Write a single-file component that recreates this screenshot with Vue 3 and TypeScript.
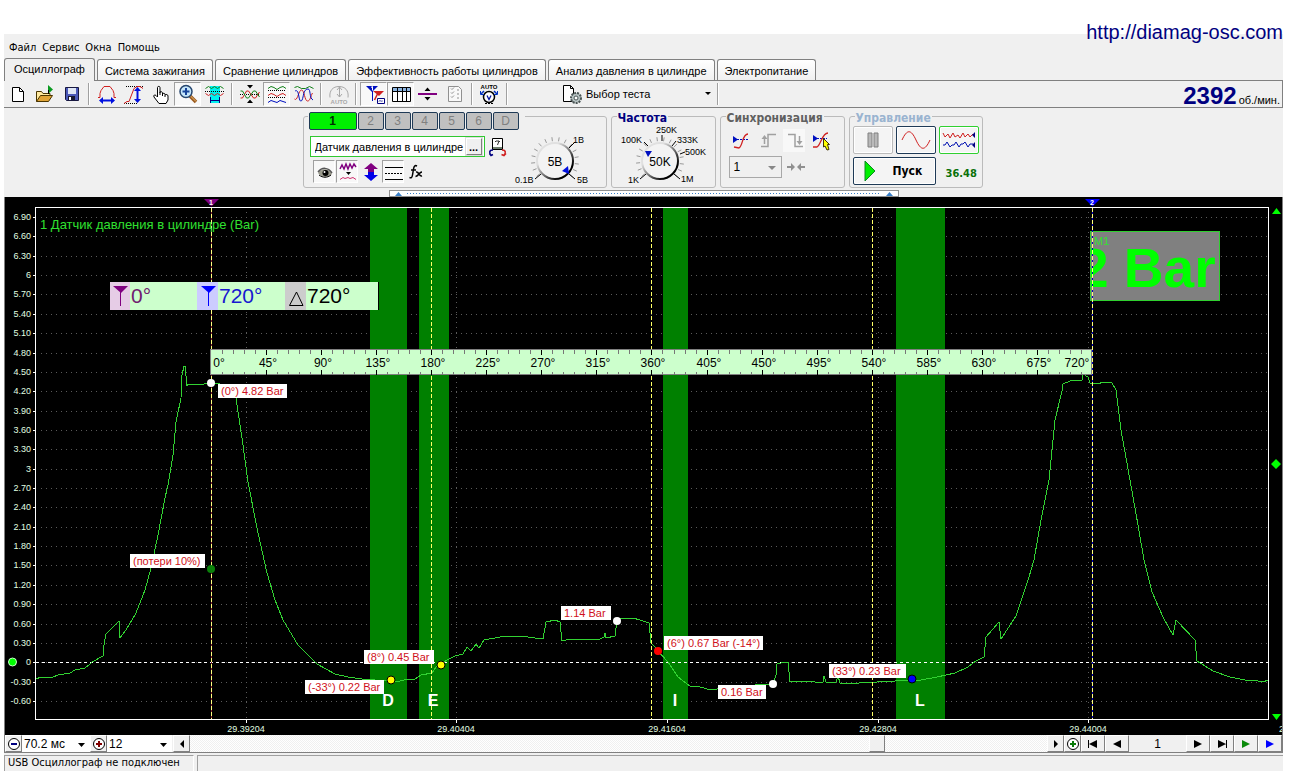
<script setup lang="ts">
interface Tool { name: string; art: string; pressed?: boolean }
interface Tag { x: number; y: number; w: number; text: string }
interface Dot { x: number; y: number; fill: string; stroke?: string }

const menu = ['Файл', 'Сервис', 'Окна', 'Помощь']
const tabs = [
  'Осциллограф', 'Система зажигания', 'Сравнение цилиндров',
  'Эффективность работы цилиндров', 'Анализ давления в цилиндре', 'Электропитание',
]

const toolGroups: Tool[][] = [
  [
    { name: 'Новый', art: '<path d="M6.5 4.5h7l4 4v10h-11z" fill="#fff" stroke="#000"/><path d="M13.5 4.5v4h4" fill="none" stroke="#000"/>' },
    { name: 'Открыть', art: '<path d="M3.500 18.500v-10h5l1.500 2h7v3" fill="#ffe9a0" stroke="#4a3500"/><path d="M3.500 18.500l4-6h12l-4 6z" fill="#e0a437" stroke="#4a3500"/><path d="M15 2v9l5-4.500z" fill="#0a9a20"/><path d="M15.500 7v4" stroke="#000"/>' },
    { name: 'Сохранить', art: '<path d="M5.500 4.500h13v13h-12l-1-1z" fill="#4a58b8" stroke="#181840"/><path d="M8 5h8v6H8z" fill="#dfe6f5"/><path d="M8 13h7v4H8z" fill="#181830"/><path d="M9 14h2v3H9z" fill="#fff"/>' },
  ],
  [
    { name: 'Амплитуда', art: '<path d="M3 14.500h2v-4l1-3 3-4h6l3 4 1 3v4h2" fill="none" stroke="#d02020"/><path d="M6 17.500h12" stroke="#0010e0" stroke-width="2"/><path d="M4 17.500l4-3.500v7zM20 17.500l-4-3.500v7z" fill="#0010e0"/>' },
    { name: 'Фронт', art: '<path d="M4 3.500h18M2 20.500h14" stroke="#000" stroke-dasharray="1 1"/><path d="M2 20.500l3-2h2l5-13 3-2h3l3 2" fill="none" stroke="#d02020"/><path d="M15.500 6v11" stroke="#0010e0" stroke-width="2"/><path d="M15.500 4l-3.500 4h7zM15.500 20l-3.500-4h7z" fill="#0010e0"/>' },
    { name: 'Рука', art: '<path d="M8.500 14V4.500c0-1.500 2.500-1.500 2.500 0V10v-1c1-1 2.500 0 2.500 1v1c.5-1 2.500-1 2.500.5v.5c1-1 3-.5 3 1v4l-2 3.500h-7l-5-6.500c-1-2 1-2.500 2-1.500z" fill="#fff" stroke="#000"/><path d="M11 10v2M13.500 11v2M16 12v2" stroke="#000"/>' },
    { name: 'Увеличить', pressed: true, art: '<path d="M14 13l6 6" stroke="#9a5a20" stroke-width="3.500"/><path d="M14.500 13l5.500 5.500" stroke="#f0c070" stroke-width="1"/><circle cx="10" cy="8.500" r="6" fill="#c5e6fa" stroke="#26466e" stroke-width="1.500"/><path d="M6.500 8.500h7M10 5v7" stroke="#17449a" stroke-width="2"/>' },
    { name: 'Участок', art: '<path d="M7 3h10v17H7z" fill="#00f0f0"/><path d="M2.500 5.500l3-2 3 2 3-2 3 2 3-2 3 2" fill="none" stroke="#108018"/><path d="M2.500 10.500l3 2 3-2 3 2 3-2 3 2 3-2" fill="none" stroke="#d02020"/><path d="M2 8.500h19" stroke="#000" stroke-dasharray="1 1"/><path d="M7.500 14v6M16.500 14v6M8 17.500h8" stroke="#000080"/>' },
  ],
  [
    { name: 'Совместить', art: '<path d="M9 2h6l-3 3.500zM9 20h6l-3-3.500z" fill="#000"/><path d="M2 11.500h20" stroke="#000" stroke-dasharray="1 1"/><path d="M2.500 15h2l4-7h2l5 7h2l4-6" fill="none" stroke="#d02020"/><path d="M2.500 8h2l4 7h2l5-7h2l4 6" fill="none" stroke="#108018"/>' },
    { name: 'Раздельно', pressed: true, art: '<path d="M3 5.500l3-2 3 1 3 2 3-2 3-1 3 2" fill="none" stroke="#108018"/><path d="M3 7.500h18M3 14.500h18" stroke="#000" stroke-dasharray="1 1"/><path d="M3 12.500l3-2 3 1 3 2 3-2 3-1 3 2" fill="none" stroke="#d02020"/><path d="M3 19.500l3-2 3 1 3 1 3-2 3 1 3 1" fill="none" stroke="#0010c0"/>' },
    { name: 'Наложить', art: '<path d="M2.500 4.500l3-1 4 2h4l4-2 4 2" fill="none" stroke="#108018"/><path d="M2.500 16c3 3 4-9 7-9s3 11 6 11 3-5 5-8" fill="none" stroke="#d02020"/><path d="M3 8c2-1 3 0 4 6s3 5 4 0 2-8 5-8 1 9 5 11" fill="none" stroke="#0010c0"/>' },
  ],
  [
    { name: 'Автоамплитуда', art: '<path d="M3 14.500c-1-7 3-11 9-11s10 4 9 11M12.500 4v10M10 7l2.500-3 2.500 3M10 11l2.500 3 2.500-3" fill="none" stroke="#a8a8a8"/><text x="12" y="21" text-anchor="middle" font-size="6" font-weight="700" fill="#a8a8a8">AUTO</text>' },
  ],
  [
    { name: 'Маркеры', pressed: true, art: '<path d="M4 3h12l-6 6z" fill="#0010c0"/><path d="M10.500 8v10" stroke="#0010c0"/><path d="M11 8h11l-5 5z" fill="#d02020"/><path d="M16.500 9l-4 8" stroke="#d02020" stroke-width="1.500"/><path d="M9 4.500l1.500-1v4" fill="none" stroke="#fff"/><path d="M15.500 15.500h7v5h-7z" fill="#fff" stroke="#000080"/><path d="M17 18.500l1-1 1 1M20 17.500v1" fill="none" stroke="#000080"/>' },
    { name: 'Таблица', pressed: true, art: '<path d="M3.500 4.500h18v14h-18z" fill="#fff" stroke="#000"/><path d="M4 5h17v3H4z" fill="#8cb4e0"/><path d="M3 8.500h19M8.500 5v13M13.500 5v13M17.500 5v13" stroke="#000"/>' },
    { name: 'Линия', art: '<path d="M2 11h19" stroke="#800080" stroke-width="2"/><path d="M8.500 8h6l-3-3.500zM8.500 14h6l-3 3.500z" fill="#000"/>' },
    { name: 'Список', art: '<path d="M5.500 3.500h10l3 3v12h-13z" fill="#f8f8f8" stroke="#909090"/><path d="M8 5.500l1 1 2-2M8 9.500l1 1 2-2M8 13.500l1 1 2-2" fill="none" stroke="#909090"/><path d="M14 7h2M14 11h2M14 15h2" stroke="#909090"/>' },
  ],
  [
    { name: 'Авто', art: '<text x="11" y="6" text-anchor="middle" font-size="6" font-weight="700" fill="#000">AUTO</text><circle cx="11" cy="14" r="5.500" fill="#fff" stroke="#000" stroke-width="1.500"/><path d="M9 12.500l2 4 2-4" fill="none" stroke="#0010a0" stroke-width="1.300"/><path d="M3 11l3-3M19 11l-3-3" stroke="#0030c0" stroke-width="1.500"/><path d="M2.500 8v3.500H6M19.500 8v3.500H16" fill="none" stroke="#0030c0"/><path d="M7 20.500h8" stroke="#000" stroke-dasharray="2 1"/>' },
  ],
]

const channels = ['2', '3', '4', '5', '6', 'D']
const channelTools: Tool[] = [
  { name: 'Показать', pressed: true, art: '<path d="M4 12c4-5 11-5 14 1-4 4-10 4-14-1z" fill="#9a9a8c"/><path d="M4 11c4-5 10-5 14 1" fill="none" stroke="#555" stroke-width="1.500"/><circle cx="11.500" cy="12" r="3" fill="#000"/><circle cx="10.500" cy="11" r="1" fill="#fff"/><path d="M5 14c4 3 8 3 12 0" fill="none" stroke="#000"/>' },
  { name: 'Фильтр', pressed: true, art: '<path d="M3 8l2-4 2 4 2-5 2 5 2-5 2 4 2-4 2 3" fill="none" stroke="#800080" stroke-width="1.500"/><path d="M9 11h5l-2.500 3z" fill="#000"/><path d="M3 18.500l3-2 2 1 3-1 2 1 3-1 3 2" fill="none" stroke="#d03070"/>' },
  { name: 'Сдвиг', art: '<path d="M11 2l7 6h-4v3H8V8H4z" fill="#800080"/><path d="M11 20l7-6h-4v-3H8v3H4z" fill="#0000e8"/>' },
  { name: 'Сетка', pressed: true, art: '<path d="M2 6.500h18M2 18.500h18" stroke="#000"/><path d="M2 12.500h18" stroke="#000" stroke-dasharray="2 1"/>' },
  { name: 'Формула', art: '<path d="M11 5c-2-1-3 0-3.500 3l-1 6c-.5 3-1.500 3-3 2.500M5 9h5" fill="none" stroke="#000" stroke-width="1.500"/><path d="M10 11c3-1 3 5 6 4M16 11c-3 0-3 4-6.500 4.500" fill="none" stroke="#000" stroke-width="1.500"/>' },
]
const syncTools: Tool[] = [
  { name: 'Уровень', art: '<path d="M3 6l5 3.500-5 3.500z" fill="#0010c0"/><path d="M7 9.500h11" stroke="#0010c0" stroke-dasharray="2 1"/><path d="M4 17l5 1c4-2 3-14 9-14" fill="none" stroke="#d02020" stroke-width="1.300"/>' },
  { name: 'По фронту', art: '<path d="M4 16.500h7v-12h8M7.500 14V8" fill="none" stroke="#a0a0a0" stroke-width="1.500"/><path d="M4.500 9l3-4 3 4z" fill="#a0a0a0"/>' },
  { name: 'По спаду', pressed: true, art: '<path d="M4 4.500h7v12h8M15.500 6v6" fill="none" stroke="#a0a0a0" stroke-width="1.500"/><path d="M12.500 11l3 4 3-4z" fill="#a0a0a0"/>' },
  { name: 'Выбор уровня', art: '<path d="M2 5l5 3.500-5 3.500z" fill="#0010c0"/><path d="M6 8.500h10" stroke="#0010c0" stroke-dasharray="2 1"/><path d="M2 17h4c4-2 5-14 11-14" fill="none" stroke="#d02020" stroke-width="1.300"/><path d="M12.500 8.500l6 6h-2l1.500 5-2 .5-2-4-1.500 1z" fill="#ff0" stroke="#403000"/>' },
]

const yLabels = Array.from({ length: 26 }, (_, i) => {
  const v = (69 - i * 3) / 10
  return { y: Math.round(217 + i * 19.36), text: Number.isInteger(v) && v % 3 === 0 ? String(v) : v.toFixed(2) }
})
const xLabels = [
  { x: 246, text: '29.39204' }, { x: 456, text: '29.40404' }, { x: 667, text: '29.41604' },
  { x: 878, text: '29.42804' }, { x: 1088, text: '29.44004' },
]
const bands = [
  { x: 370, w: 37, name: 'D', tx: 388 }, { x: 419, w: 30, name: 'E', tx: 433 },
  { x: 663, w: 25, name: 'I', tx: 675 }, { x: 896, w: 49, name: 'L', tx: 920 },
]
const rulerTicks = Array.from({ length: 79 }, (_, i) => ({ x: Math.round(211 + (i + 1) * 11.012) + 0.5, major: (i + 1) % 5 === 0 }))
const rulerLabels = Array.from({ length: 17 }, (_, i) => ({
  x: i === 0 ? 219 : i === 16 ? 1077 : Math.round(211 + i * 55.06) + 2,
  text: `${i * 45}°`,
}))
const tags: Tag[] = [
  { x: 218, y: 384, w: 69, text: '(0°) 4.82 Bar' },
  { x: 130, y: 554, w: 75, text: '(потери 10%)' },
  { x: 364, y: 650, w: 70, text: '(8°) 0.45 Bar' },
  { x: 305, y: 680, w: 79, text: '(-33°) 0.22 Bar' },
  { x: 561, y: 606, w: 50, text: '1.14 Bar' },
  { x: 664, y: 636, w: 99, text: '(6°) 0.67 Bar (-14°)' },
  { x: 718, y: 685, w: 48, text: '0.16 Bar' },
  { x: 829, y: 664, w: 77, text: '(33°) 0.23 Bar' },
]
const dots: Dot[] = [
  { x: 211, y: 383, fill: '#fff' }, { x: 211, y: 569, fill: '#0a800a' },
  { x: 391, y: 680, fill: '#ff0', stroke: '#000' }, { x: 441, y: 665, fill: '#ff0', stroke: '#000' },
  { x: 617, y: 621, fill: '#fff' }, { x: 658, y: 651, fill: '#f00' },
  { x: 773, y: 684, fill: '#fff' }, { x: 912, y: 679, fill: '#00f', stroke: '#000' },
]
const wave = [
  '36,679 41,677 53,677 58,675 70,673 75,670 85,668 90,664 92,662 103,656 104,645 106,634 119,621 120,638 126,630 136,613 145,590 151,568',
  '158,535 165,498 168,485 173,455 176,422 181,398 182,375 184,366 185,366 187,386 188,384 200,385 204,384 211,383 220,384 232,386 236,398 243,445 248,482 257,528 267,573 275,600 283,620 298,645 317,664 335,674 348,677 362,679 375,680 391,681 400,681 408,679 415,679 421,675 432,673 436,667 441,664',
  '447,660 455,656 463,654 467,647 471,651 476,644 479,648 484,640 500,637 503,636 507,637 520,636 543,639 546,622 555,620 560,622 562,641 570,639 600,639 604,637 605,633 606,638 615,636 617,621 621,618 633,618 640,620 649,623 651,643 654,646 658,651 668,662 678,677 690,686 700,687 711,690 717,689 740,688 760,684 773,684',
  '776,675 777,664 781,663 788,662 790,682 802,681 815,682 823,682 824,676 826,682 836,682 838,676 840,683 855,684 863,682 877,682 895,681 911,680 921,680 937,677 955,673 968,667 976,661 984,657 986,637 999,622 1001,639 1016,616 1029,577 1034,560',
  '1041,520 1049,480 1055,420 1062,391 1063,384 1070,381 1082,380 1083,374 1088,377 1090,383 1098,384 1103,382 1112,383 1116,390 1121,430 1130,480 1138,525 1144,560 1152,592 1163,617 1173,635 1176,620 1195,640 1197,661 1213,671 1230,677 1245,680 1258,681 1263,682 1268,680',
].join(' ')

const tick = (cx: number, cy: number, r1: number, r2: number, deg: number) => {
  const a = (deg * Math.PI) / 180
  const p = (r: number) => `${(cx + r * Math.cos(a)).toFixed(1)} ${(cy + r * Math.sin(a)).toFixed(1)}`
  return `M${p(r1)}L${p(r2)}`
}
const ring = (cx: number, cy: number) =>
  Array.from({ length: 16 }, (_, i) => tick(cx, cy, 20, 24, 140 + i * 17.5)).join('')
</script>

<template>
  <div class="page">
    <a class="site" href="http://diamag-osc.com">http://diamag-osc.com</a>
    <main class="app">
      <nav class="menu">
        <button v-for="m in menu" :key="m" type="button">{{ m }}</button>
      </nav>
      <div class="tabs" role="tablist">
        <button v-for="(t, i) in tabs" :key="t" type="button" role="tab" class="tab" :class="{ active: i === 0 }" :aria-selected="i === 0">{{ t }}</button>
      </div>

      <div class="toolbar">
        <template v-for="(g, gi) in toolGroups" :key="gi">
          <button v-for="t in g" :key="t.name" type="button" class="tool" :class="{ pressed: t.pressed }" :aria-label="t.name">
            <svg width="24" height="22" viewBox="0 0 24 22" v-html="t.art"></svg>
          </button>
          <span class="sep"></span>
        </template>
        <button type="button" class="test">
          <svg width="22" height="22" viewBox="0 0 22 22">
            <path d="M2.500 2.500h7l3 3v13h-10z" fill="#fff" stroke="#000" />
            <path d="M9.500 2.500v3h3" fill="none" stroke="#000" />
            <circle cx="15" cy="15" r="5" fill="#b8c4c4" stroke="#4a5555" stroke-width="2" stroke-dasharray="2 1" />
            <circle cx="15" cy="15" r="2" fill="#fff" stroke="#4a5555" />
          </svg>
          <span>Выбор теста</span>
          <svg class="caret" width="7" height="4" viewBox="0 0 7 4"><path d="M1 0h6L4 3z" /></svg>
        </button>
        <span class="sep"></span>
        <div class="rpm"><strong>2392</strong><span>об./мин.</span></div>
      </div>

      <div class="panel">
        <fieldset class="group channel">
          <legend class="chan-legend">
            <button type="button" class="chan on">1</button>
            <button v-for="c in channels" :key="c" type="button" class="chan">{{ c }}</button>
          </legend>
          <div class="chan-body">
            <div class="row">
              <div class="sensor">
                <input type="text" value="Датчик давления в цилиндре" aria-label="Датчик" />
                <button type="button" aria-label="Выбрать датчик">...</button>
              </div>
              <button type="button" class="swap" aria-label="Калибровка">
                <svg width="20" height="20" viewBox="0 0 20 20">
                  <path d="M4.500 1.500h10v11h-10z" fill="#fff" stroke="#000" />
                  <path d="M5 10h9v2H5z" fill="#708070" />
                  <path d="M7 5l1-1h3l1 1M11 4l-1.500 4" fill="none" stroke="#333" />
                  <path d="M5 13c-4 0-4 3-2 5M5 17.500l-2 1-1.500-2" fill="none" stroke="#000080" stroke-width="1.500" />
                  <path d="M14 13c4 0 4 3 2 5M13.500 17.500l2.500 1 2-2" fill="none" stroke="#d02020" stroke-width="1.500" />
                </svg>
              </button>
            </div>
            <div class="row minis">
              <button v-for="t in channelTools" :key="t.name" type="button" class="mini" :class="{ pressed: t.pressed }" :aria-label="t.name">
                <svg width="22" height="22" viewBox="0 0 22 22" v-html="t.art"></svg>
              </button>
            </div>
          </div>
          <svg class="knob" width="96" height="66" viewBox="509 121 96 66">
            <defs>
              <linearGradient id="rim" x1="0" y1="0" x2="1" y2="1">
                <stop offset="0.300" stop-color="#e0e0e0" /><stop offset="0.800" stop-color="#000" />
              </linearGradient>
            </defs>
            <path :d="ring(556, 161)" stroke="#999" />
            <path d="M570 148l6-6M570 174l6 5M542 174l-6 5" stroke="#000" />
            <circle cx="556" cy="161" r="18" fill="#f3f3f3" stroke="url(#rim)" stroke-width="2" />
            <path d="M563 171l6-5 1 8z" fill="#0010e0" />
            <text x="556" y="166" font-size="12" text-anchor="middle">5В</text>
            <text x="574" y="143">1В</text><text x="578" y="183">5В</text><text x="516" y="183">0.1В</text>
          </svg>
        </fieldset>

        <fieldset class="group freq">
          <legend>Частота</legend>
          <svg class="knob" width="103" height="66" viewBox="612 121 103 66">
            <path :d="ring(660, 161)" stroke="#999" />
            <path d="M648 146l-4-4M662 141v-6M672 146l4-5M680 154l5-2M674 174l6 5M646 174l-6 5" stroke="#000" />
            <circle cx="660" cy="161" r="18" fill="#f3f3f3" stroke="url(#rim)" stroke-width="2" />
            <path d="M645 151h7l-4 6z" fill="#0010c0" />
            <text x="660" y="166" font-size="12" text-anchor="middle">50K</text>
            <text x="656" y="133">250K</text><text x="621" y="143">100K</text><text x="677" y="143">333K</text>
            <text x="685" y="155">500K</text><text x="628" y="183">1K</text><text x="681" y="182">1M</text>
          </svg>
        </fieldset>

        <fieldset class="group sync">
          <legend>Синхронизация</legend>
          <div class="row sync-tools">
            <button v-for="t in syncTools" :key="t.name" type="button" class="mini" :class="{ pressed: t.pressed }" :aria-label="t.name">
              <svg width="22" height="22" viewBox="0 0 22 22" v-html="t.art"></svg>
            </button>
          </div>
          <div class="row sync-row">
            <label class="pick disabled">
              <select aria-label="Канал синхронизации"><option>1</option></select>
              <svg class="caret" width="8" height="4" viewBox="0 0 8 4"><path d="M0 0h8L4 4z" /></svg>
            </label>
            <svg width="20" height="12" viewBox="0 0 20 12"><path d="M1 5h4V2l4 4-4 4V7H1zM19 5h-4V2l-4 4 4 4V7h4z" fill="#909090" /></svg>
          </div>
        </fieldset>

        <fieldset class="group control">
          <legend>Управление</legend>
          <div class="ctl-grid">
            <button type="button" class="ctl off" aria-label="Пауза">
              <svg width="12" height="16" viewBox="0 0 12 16"><path d="M1 1h4v14H1zM7 1h4v14H7z" fill="#b8b8b8" stroke="#808080" /></svg>
            </button>
            <button type="button" class="ctl" aria-label="Сигнал">
              <svg width="32" height="22" viewBox="0 0 32 22"><path d="M2 11C7 0 11 0 16 11s9 11 14 0" fill="none" stroke="#d02020" /></svg>
            </button>
            <button type="button" class="ctl lit" aria-label="Самописец">
              <svg width="36" height="22" viewBox="0 0 36 22">
                <path d="M2 4l2 4 3-3 2 4 3-5 2 4 3-2 2 3 3-5 2 4 3-3 2 3 3-3" fill="none" stroke="#d02020" />
                <path d="M2 16h2l2-3 3 5 2-2h2l2-3 3 5 2-3h2l2-2 3 5 2-3h3" fill="none" stroke="#0010b0" />
                <path d="M34 3v6l-3-3zM34 13v6l-3-3z" fill="#000080" />
              </svg>
            </button>
            <button type="button" class="ctl start">
              <svg width="12" height="20" viewBox="0 0 12 20"><path d="M1 0l10 10L1 20z" fill="#00f000" stroke="#0a8a20" /></svg>
              <span>Пуск</span>
            </button>
            <output>36.48</output>
          </div>
        </fieldset>
      </div>

      <div class="splitter">
        <svg width="7" height="4" viewBox="0 0 7 4"><path d="M0 4l3.500-4L7 4z" /></svg>
        <i></i>
        <svg width="7" height="4" viewBox="0 0 7 4"><path d="M0 4l3.500-4L7 4z" /></svg>
      </div>

      <svg class="scope" viewBox="5 197 1277 538" role="img" aria-label="Осциллограмма давления">
        <defs><clipPath id="meter"><rect x="1091" y="232" width="128" height="68" /></clipPath></defs>
        <rect x="5" y="197" width="1277" height="538" fill="#000" />
        <g class="grid">
          <path v-for="l in yLabels" :key="l.y" :d="`M41 ${l.y + 0.5}H1268`" />
          <path v-for="l in xLabels" :key="l.x" :d="`M${l.x + 0.5} 212V719`" />
        </g>
        <rect v-for="b in bands" :key="b.name" :x="b.x" y="208" :width="b.w" height="511" fill="#008000" />
        <g class="axis-text">
          <template v-for="l in yLabels" :key="l.y">
            <path :d="`M33 ${l.y + 0.5}h3`" stroke="#fff" />
            <text x="31" :y="l.y + 3" text-anchor="end">{{ l.text }}</text>
          </template>
          <template v-for="l in xLabels" :key="l.x">
            <path :d="`M${l.x + 0.5} 720v3`" stroke="#fff" />
            <text :x="l.x" y="732" text-anchor="middle">{{ l.text }}</text>
          </template>
          <text x="1279" y="732">2</text>
        </g>
        <path d="M36 662.500H1268" stroke="#fff" stroke-dasharray="3 3" />
        <polyline class="wave" :points="wave" />
        <path d="M431.500 208V719M651.500 208V719M872.500 208V719" stroke="#ff6" stroke-dasharray="4 2" />
        <path d="M211.500 208V719" stroke="#802030" /><path d="M211.500 208V719" stroke="#ffff80" stroke-dasharray="4 2" />
        <text class="title" x="40" y="229">1 Датчик давления в цилиндре (Bar)</text>

        <g>
          <rect x="1090.500" y="231.500" width="129" height="69" fill="#808080" stroke="#30d030" />
          <text class="meter" x="1078" y="287" clip-path="url(#meter)">2 Bar</text>
          <text x="1094" y="245" font-size="11" fill="#30e030">M1</text>
        </g>
        <path d="M1092.500 208V719" stroke="#0000c0" /><path d="M1092.500 208V719" stroke="#ffff80" stroke-dasharray="4 2" />
        <rect x="35.500" y="207.500" width="1233" height="512" fill="none" stroke="#fff" />

        <g class="ruler">
          <rect x="210.500" y="349.500" width="881" height="25" fill="#cfc" stroke="#808080" />
          <path v-for="t in rulerTicks" :key="t.x" :d="`M${t.x} 350v${t.major ? 5 : 4}M${t.x} ${t.major ? 370 : 372}V375`" :stroke="t.major ? '#000' : '#777'" />
          <text v-for="l in rulerLabels" :key="l.text" :x="l.x" y="367" text-anchor="middle">{{ l.text }}</text>
        </g>

        <g class="cursors">
          <rect x="110" y="282" width="268" height="28" fill="#cfc" />
          <path d="M378.500 282v28" stroke="#000" />
          <rect x="110" y="282" width="20" height="28" fill="#e6cce6" />
          <rect x="197" y="282" width="21" height="28" fill="#ccf" />
          <rect x="285" y="282" width="21" height="28" fill="#ccc" />
          <path d="M113 286h15l-7 7z" fill="#800080" /><path d="M120.500 290v16" stroke="#800080" />
          <path d="M201 286h15l-7 7z" fill="#00f" /><path d="M208.500 290v16" stroke="#00f" />
          <path d="M296.500 292l6.500 13.500h-13.500z" fill="none" stroke="#000" />
          <text x="131" y="303" fill="#702070">0°</text>
          <text x="219" y="303" fill="#1818d0">720°</text>
          <text x="307" y="303">720°</text>
        </g>

        <g v-for="t in tags" :key="t.text" class="tag">
          <rect :x="t.x" :y="t.y" :width="t.w" height="14" fill="#fff" />
          <text :x="t.x + 3" :y="t.y + 11">{{ t.text }}</text>
        </g>
        <circle v-for="d in dots" :key="d.x + '-' + d.y" :cx="d.x" :cy="d.y" r="4" :fill="d.fill" :stroke="d.stroke ?? 'none'" />
        <text v-for="b in bands" :key="b.name" class="band-name" :x="b.tx" y="706">{{ b.name }}</text>

        <path d="M204 199h15l-7.500 7.500z" fill="#800080" /><text class="flag" x="211" y="205">1</text>
        <path d="M1085 199h15l-7.500 7.500z" fill="#00f" /><text class="flag" x="1092" y="205">2</text>
        <circle cx="12.500" cy="662" r="4" fill="#0f0" stroke="#cfc" />
        <path d="M1276.500 208l4.500 6h-9zM1276.500 720l4.500-6h-9zM1276 459l5 5-5 5-5-5z" fill="#0f0" />
      </svg>

      <div class="bottom">
        <button type="button" class="raised" aria-label="Уменьшить время">
          <svg width="14" height="14" viewBox="0 0 14 14"><circle cx="7" cy="7" r="5.500" fill="#fff" stroke="#000" /><path d="M4 7h6" stroke="#000080" stroke-width="2" /></svg>
        </button>
        <label class="pick time">
          <select aria-label="Время"><option>70.2 мс</option></select>
          <svg class="caret" width="7" height="4" viewBox="0 0 7 4"><path d="M0 0h7L3.500 4z" /></svg>
        </label>
        <button type="button" class="raised" aria-label="Увеличить время">
          <svg width="14" height="14" viewBox="0 0 14 14"><circle cx="7" cy="7" r="5.500" fill="#fff" stroke="#000" /><path d="M4 7h6M7 4v6" stroke="#800000" stroke-width="2" /></svg>
        </button>
        <label class="pick count">
          <select aria-label="Делений"><option>12</option></select>
          <svg class="caret" width="7" height="4" viewBox="0 0 7 4"><path d="M0 0h7L3.500 4z" /></svg>
        </label>
        <button type="button" class="raised" aria-label="Влево"><svg width="6" height="8" viewBox="0 0 6 8"><path d="M5 0v8L1 4z" /></svg></button>
        <input class="scroll" type="range" min="0" max="1000" value="807" aria-label="Прокрутка" />
        <button type="button" class="raised" aria-label="Вправо"><svg width="6" height="8" viewBox="0 0 6 8"><path d="M1 0v8l4-4z" /></svg></button>
        <button type="button" class="raised" aria-label="Добавить">
          <svg width="14" height="14" viewBox="0 0 14 14"><circle cx="7" cy="7" r="5.500" fill="#fff" stroke="#000" /><path d="M4 7h6M7 4v6" stroke="#0a7a0a" stroke-width="2" /></svg>
        </button>
        <button type="button" class="raised wide" aria-label="В начало"><svg width="12" height="8" viewBox="0 0 12 8"><path d="M1 0h1v8H1zM10 0v8L2 4z" /></svg></button>
        <button type="button" class="raised wide" aria-label="Назад"><svg width="8" height="8" viewBox="0 0 8 8"><path d="M8 0v8L0 4z" /></svg></button>
        <span class="frame">1</span>
        <button type="button" class="raised wide" aria-label="Вперёд"><svg width="8" height="8" viewBox="0 0 8 8"><path d="M0 0v8l8-4z" /></svg></button>
        <button type="button" class="raised wide" aria-label="В конец"><svg width="12" height="8" viewBox="0 0 12 8"><path d="M10 0h1v8h-1zM2 0v8l8-4z" /></svg></button>
        <button type="button" class="raised wide" aria-label="Воспроизвести"><svg width="8" height="8" viewBox="0 0 8 8"><path d="M0 0v8l8-4z" fill="#0a8a0a" /></svg></button>
        <button type="button" class="raised wide" aria-label="Воспроизвести всё"><svg width="8" height="8" viewBox="0 0 8 8"><path d="M0 0v8l8-4z" fill="#00f" /></svg></button>
      </div>

      <footer class="status"><span>USB Осциллограф не подключен</span><span></span></footer>
    </main>
  </div>
</template>

<style>
body { margin: 0; background: #fff; }
</style>

<style scoped>
.page { position: relative; padding: 34px 13px 0 4px; font: 11px/14px "Liberation Sans", Arial, sans-serif; color: #000; }
.page *, .page *::before { box-sizing: border-box; }
button, input, select { font: inherit; color: inherit; margin: 0; padding: 0; border: 0; background: none; border-radius: 0; outline: 0; }
svg { display: block; flex: none; }
.site { position: absolute; right: 13px; top: 21px; font-size: 20px; line-height: 22px; color: #000080; text-decoration: none; }
.app { background: #f0f0f0; }
.menu { display: flex; gap: 6px; height: 24px; padding: 3px 5px 0; font-family: "DejaVu Sans Condensed", "DejaVu Sans", sans-serif; }
.tabs { display: flex; align-items: flex-end; gap: 2px; height: 23px; border-bottom: 1px solid #808080; }
.tab { height: 21px; padding: 2px 7px 0; font-size: 11px; border: 1px solid #808080; border-bottom: 0; border-radius: 3px 3px 0 0; background: linear-gradient(#fff, #f0f0f0); white-space: nowrap; }
.tab.active { height: 23px; margin-bottom: -1px; padding: 0 9px 2px; background: #f0f0f0; }
.toolbar { display: flex; align-items: center; height: 27px; border: solid #808080; border-width: 0 1px 1px 0; }
.tool { display: flex; align-items: center; justify-content: center; width: 27px; height: 24px; border: 1px solid transparent; }
.pressed { border: 1px solid; border-color: #a0a0a0 #fff #fff #a0a0a0; background: #f8f8f8; }
.sep { width: 8px; height: 22px; background: linear-gradient(#a0a0a0, #a0a0a0) 3px 0 / 1px 100% no-repeat, linear-gradient(#fff, #fff) 4px 0 / 1px 100% no-repeat; }
.test { display: flex; align-items: center; gap: 3px; width: 150px; margin-left: 50px; font-size: 11px; }
.test .caret { margin-left: auto; }
.test + .sep { margin-left: 3px; }
.rpm { display: flex; align-items: baseline; gap: 2px; margin-left: auto; padding: 3px 2px 0 0; }
.rpm strong { font-size: 24px; line-height: 24px; color: #000080; }
.panel { display: flex; justify-content: center; gap: 4px; padding: 3px 2px 2px 0; }
.group { min-width: 0; height: 77px; margin: 0; padding: 0; border: 1px solid #bbb; border-radius: 3px; }
.group legend { height: 10px; margin-left: 5px; padding: 0 1px; font: bold 12px/14px "DejaVu Sans Condensed", "DejaVu Sans", sans-serif; color: #000080; }
.group.sync legend { color: #606060; }
.group.control legend { color: #9ab4d0; }
.row { display: flex; align-items: center; }
.channel { display: grid; grid-template-columns: 204px 96px; width: 304px; }
.group .chan-legend { display: flex; gap: 1px; margin-left: 4px; padding: 1px 6px 0 1px; }
.chan { flex: none; width: 26px; height: 18px; font: 12px/14px "Liberation Sans", Arial, sans-serif; color: #808080; border: 1px solid #1f3a56; border-radius: 2px; background: #c0c0c0; }
.chan.on { width: 48px; font-weight: bold; color: #003000; background: #00f000; }
.chan-body { padding: 15px 0 0 6px; }
.sensor { display: flex; align-items: center; width: 177px; height: 21px; padding: 1px 2px; border: 1px solid #30c830; background: #fff; }
.sensor input { flex: 1; min-width: 0; padding-left: 2px; }
.sensor button { width: 16px; height: 17px; line-height: 8px; font-weight: bold; border: 1px solid; border-color: #fff #808080 #808080 #fff; background: #f0f0f0; box-shadow: 0 0 0 1px #ddd; }
.swap { margin-left: 3px; }
.minis { gap: 1px; margin-top: 3px; padding-left: 3px; }
.mini { width: 22px; height: 23px; overflow: hidden; display: grid; place-items: center; border: 1px solid transparent; }
.mini.pressed { border-color: #a0a0a0 #fff #fff #a0a0a0; }
.knob { font-size: 9px; }
.freq { width: 105px; }
.sync { width: 125px; }
.sync-tools { gap: 5px; padding: 8px 0 0 8px; }
.sync-row { gap: 4px; padding: 4px 0 0 8px; }
.sync-tools .pressed { border-color: #f8f8f8; }
.control { width: 134px; }
.ctl-grid { display: grid; grid-template-columns: 40px 40px 40px; gap: 3px; padding: 5px 3px 0; }
.ctl { display: grid; place-items: center; height: 28px; border: 1px solid #1f3a56; border-radius: 2px; background: #f4f4f4; box-shadow: inset 0 0 0 1px #fff; }
.ctl.off { border-color: #bbb; }
.ctl.lit { border-color: #30d030; }
.start { grid-column: span 2; display: flex; align-items: center; gap: 17px; padding-left: 10px; font: bold 12px/14px "DejaVu Sans Condensed", "DejaVu Sans", sans-serif; }
output { align-self: center; padding: 5px 0 0 7px; font: bold 11px/14px "DejaVu Sans Condensed", "DejaVu Sans", sans-serif; color: #0a700a; }
.pick { position: relative; display: block; }
.pick select { appearance: none; width: 100%; height: 100%; padding-left: 2px; font-size: 12px; }
.pick .caret { position: absolute; right: 5px; top: 50%; margin-top: -1px; }
.disabled { width: 53px; height: 22px; border: 1px solid #a8a8a8; }
.disabled select { padding-left: 4px; }
.disabled .caret { fill: #888; }
.splitter { display: flex; align-items: center; gap: 5px; width: 510px; height: 7px; margin: 0 auto; padding: 0 5px; border: 1px solid #909090; background: #fff; }
.splitter svg { fill: #3a80c8; }
.splitter i { flex: 1; height: 1px; background: repeating-linear-gradient(90deg, #3a80c8 0 1px, transparent 1px 3px); }
.scope { width: 100%; height: auto; border: solid #808080; border-width: 0 1px; font-family: "Liberation Sans", Arial, sans-serif; }
.grid path { stroke: #5a5a5a; stroke-dasharray: 1 4; }
.wave { fill: none; stroke: #32d232; shape-rendering: crispEdges; }
.axis-text { font-size: 9px; fill: #e0ffe0; }
.title { font-size: 13px; fill: #30e030; }
.meter { font-size: 55px; font-weight: bold; fill: #0f0; }
.ruler text { font-size: 12px; }
.cursors text { font-size: 21px; }
.tag text { font-size: 11px; fill: #d01020; }
.band-name { font-size: 16px; font-weight: bold; fill: #fff; text-anchor: middle; }
.flag { font-size: 7px; font-weight: bold; fill: #fff; text-anchor: middle; }
.bottom { display: flex; height: 18px; border: solid #808080; border-width: 0 1px 1px; }
.raised { flex: none; display: grid; place-items: center; width: 17px; border: 1px solid; border-color: #fff #808080 #808080 #fff; background: #f0f0f0; }
.wide { width: 24px; }
.bottom .pick { background: #fff; }
.time { width: 68px; }
.count { width: 65px; margin-right: 1px; }
.scroll { flex: 1; min-width: 0; appearance: none; background: repeating-conic-gradient(#f0f0f0 0 25%, #fff 0 50%) 0 0 / 2px 2px; }
.scroll::-webkit-slider-thumb { appearance: none; width: 16px; height: 17px; border: 1px solid; border-color: #fff #808080 #808080 #fff; background: #f0f0f0; }
.frame { width: 57px; text-align: center; font-size: 12px; line-height: 18px; }
.status { display: flex; gap: 3px; height: 18px; padding-top: 2px; background: #f0f0f0; font-family: "DejaVu Sans Condensed", "DejaVu Sans", sans-serif; }
.status span { padding-left: 3px; border: solid #a0a0a0; border-width: 1px 0 0 1px; }
.status span:first-child { width: 190px; border-right: 1px solid #fff; }
.status span:last-child { flex: 1; }
</style>
